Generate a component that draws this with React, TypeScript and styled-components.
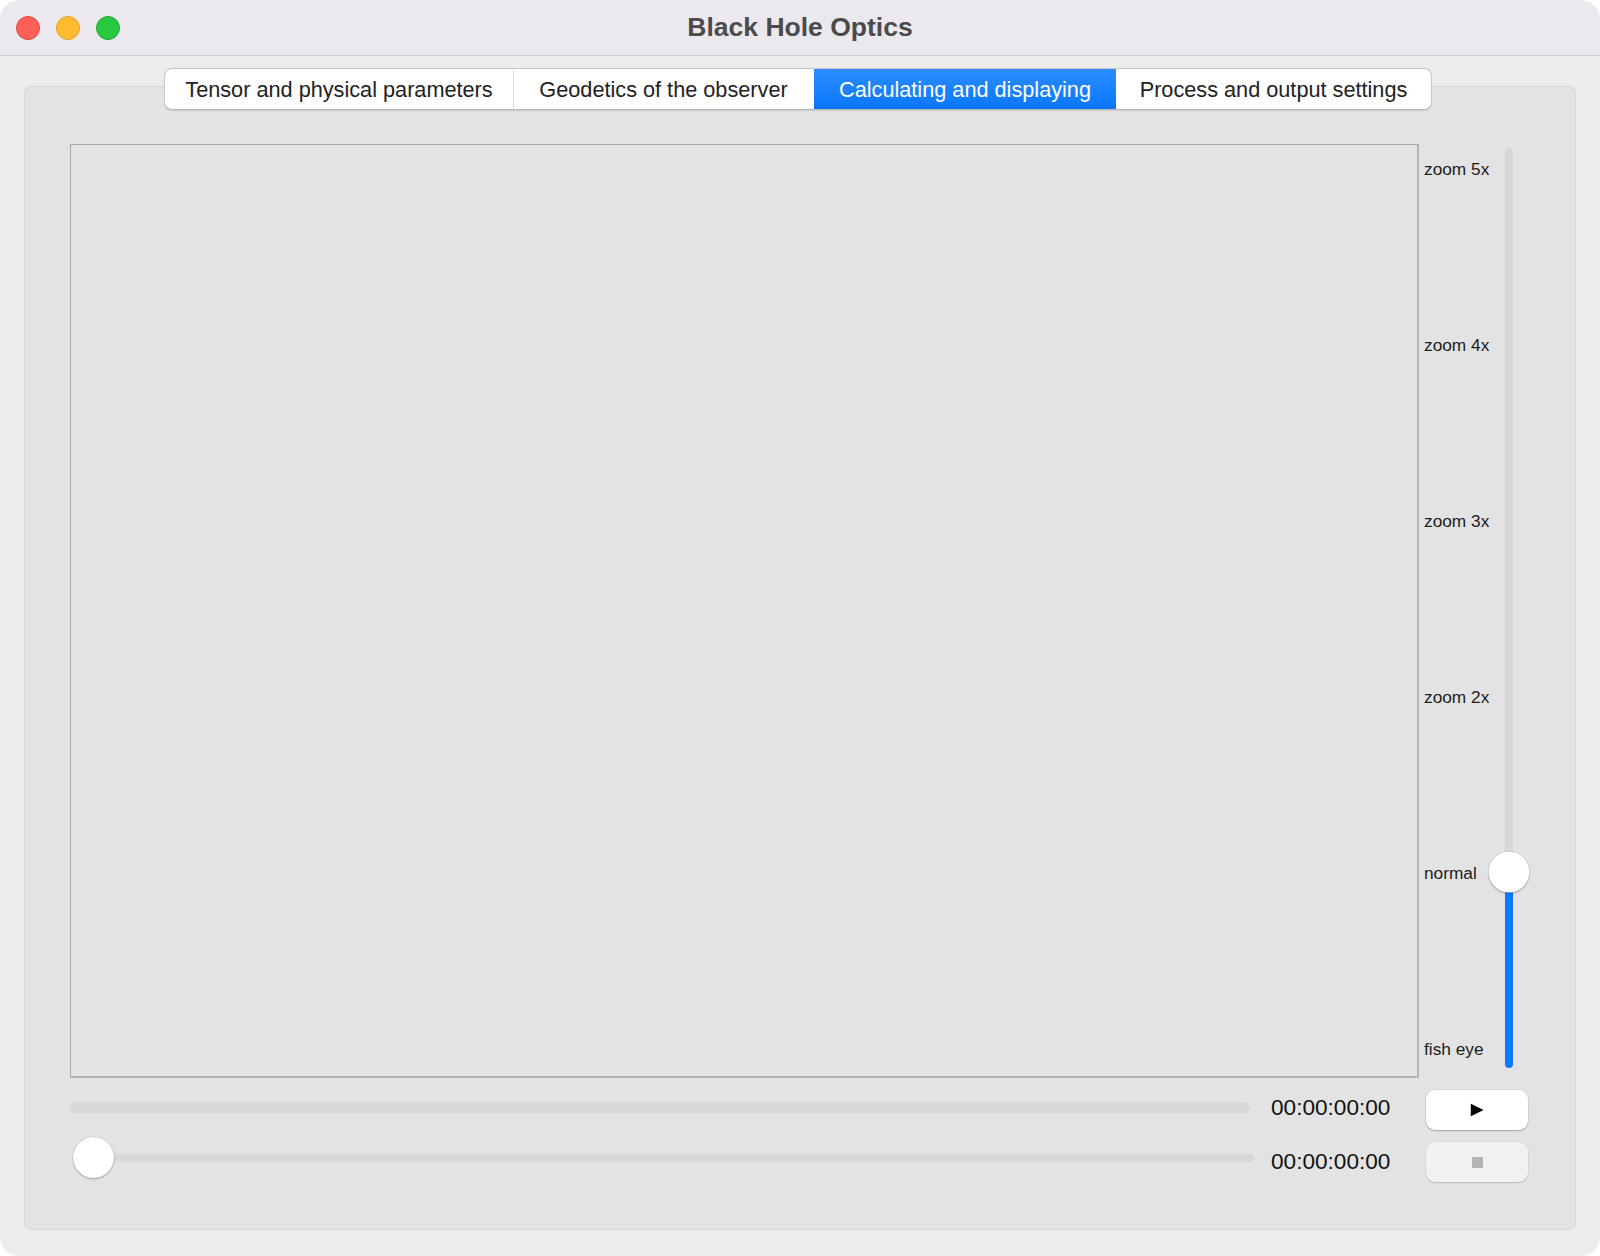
import * as React from 'react';
import styled, { createGlobalStyle } from 'styled-components';

const GlobalStyle = createGlobalStyle`
  *, *::before, *::after {
    box-sizing: border-box;
  }
  html, body {
    margin: 0;
    padding: 0;
    background: #ffffff;
  }
  body {
    font-family: "Liberation Sans", Arial, sans-serif;
  }
`;

const Window = styled.div`
  width: 1600px;
  height: 1256px;
  border-radius: 20px;
  background: #ececec;
  overflow: hidden;
  display: flex;
  flex-direction: column;
`;

const TitleBar = styled.header`
  height: 56px;
  flex: none;
  background: #ebe9ee;
  border-bottom: 1px solid #d0cfd2;
  display: grid;
  grid-template-columns: 1fr auto 1fr;
  align-items: center;
`;

const Lights = styled.div`
  display: flex;
  gap: 16px;
  padding-left: 16px;
`;

const Light = styled.span<{ fill: string; edge: string }>`
  width: 24px;
  height: 24px;
  border-radius: 50%;
  background: ${p => p.fill};
  border: 1px solid ${p => p.edge};
`;

const Title = styled.h1`
  margin: 0;
  font-size: 26.5px;
  font-weight: 700;
  color: #4b4b4d;
  letter-spacing: 0;
`;

const Content = styled.main`
  flex: 1;
  display: flex;
  padding: 30px 24px 26px 24px;
`;

const Panel = styled.section`
  flex: 1;
  display: flex;
  flex-direction: column;
  background: #e3e3e3;
  border: 1px solid #d6d6d6;
  border-radius: 7px;
`;

const TabBar = styled.nav`
  align-self: center;
  margin-top: -19px;
  margin-left: -5px;
  height: 41.5px;
  display: flex;
  background: #ffffff;
  border: 1px solid #c8c8c8;
  border-bottom-color: #b9b9b9;
  border-radius: 8px;
  overflow: hidden;
  box-shadow: 0 0.5px 1px rgba(0, 0, 0, 0.12);
`;

const Tab = styled.div<{ w: number; active?: boolean; divider?: boolean }>`
  width: ${p => p.w}px;
  display: flex;
  align-items: center;
  justify-content: center;
  padding-top: 2px;
  font-size: 21.7px;
  color: ${p => (p.active ? '#ffffff' : '#222222')};
  background: ${p =>
    p.active ? 'linear-gradient(180deg, #2a8cff 0%, #0a77fe 100%)' : 'transparent'};
  border-left: 1px solid ${p => (p.divider ? '#dcdcdc' : 'transparent')};
  white-space: nowrap;
`;

const Body = styled.div`
  display: flex;
  flex-direction: column;
  margin-top: 34.5px;
  padding: 0 47px 0 45px;
`;

const ViewRow = styled.div`
  display: flex;
  height: 934px;
`;

const Canvas = styled.div`
  flex: 1;
  background: #e4e4e4;
  border-top: 1px solid #a9a9a9;
  border-left: 1px solid #a9a9a9;
  border-right: 2px solid #b3b3b3;
  border-bottom: 2px solid #b3b3b3;
`;

const ZoomColumn = styled.div`
  width: 109px;
  display: flex;
  padding-left: 5px;
`;

const ZoomLabels = styled.div`
  flex: 1;
  display: flex;
  flex-direction: column;
  justify-content: space-between;
  padding: 15px 0 19px;
`;

const ZoomLabel = styled.span`
  height: 20px;
  line-height: 20px;
  font-size: 17.3px;
  color: #1c1c1c;
  white-space: nowrap;
`;

const VSlider = styled.div`
  width: 41px;
  display: flex;
  flex-direction: column;
  align-items: center;
  padding: 4px 0 10px;
`;

const VTrack = styled.div`
  position: relative;
  flex: 1;
  width: 8px;
  border-radius: 4px;
  background: #d6d6d6;
`;

const VFill = styled.div`
  position: absolute;
  left: 0;
  right: 0;
  bottom: 0;
  border-radius: 4px;
  background: #0a7aff;
`;

const Thumb = styled.div`
  position: absolute;
  width: 41px;
  height: 41px;
  border-radius: 50%;
  background: #ffffff;
  box-shadow: 0 1px 2px rgba(0, 0, 0, 0.28), 0 0 0 0.5px rgba(0, 0, 0, 0.12);
`;

const VThumb = styled(Thumb)`
  left: 50%;
  transform: translate(-50%, 50%);
`;

const ControlRow = styled.div<{ h: number; gapTop: number }>`
  display: flex;
  align-items: center;
  height: ${p => p.h}px;
  margin-top: ${p => p.gapTop}px;
`;

const Progress = styled.div`
  flex: 1;
  height: 11px;
  border-radius: 6px;
  background: #d8d8d8;
`;

const HSlider = styled.div`
  flex: 1;
  position: relative;
  align-self: flex-start;
  margin: -5px 0 0 3px;
  height: 41px;
  display: flex;
  align-items: center;
`;

const HTrack = styled.div`
  flex: 1;
  height: 8px;
  border-radius: 4px;
  background: #d8d8d8;
`;

const HThumb = styled(Thumb)`
  left: 0;
  top: 0;
`;

const Time = styled.span<{ gap: number }>`
  margin-left: ${p => p.gap}px;
  width: 120px;
  font-size: 22.6px;
  color: #111111;
  white-space: nowrap;
`;

const Button = styled.button<{ disabled?: boolean }>`
  align-self: flex-start;
  margin-left: 35px;
  width: 102px;
  height: 40px;
  padding: 0;
  border: none;
  border-radius: 9px;
  display: flex;
  align-items: center;
  justify-content: center;
  background: ${p => (p.disabled ? '#f1f1f1' : '#ffffff')};
  box-shadow: 0 1px 1.5px rgba(0, 0, 0, ${p => (p.disabled ? 0.14 : 0.25)}),
    0 0 0 0.5px rgba(0, 0, 0, 0.08);
`;

const StopGlyph = styled.span`
  width: 11px;
  height: 11px;
  background: #b5b5b5;
`;

const tabs = [
  { label: 'Tensor and physical parameters', w: 348 },
  { label: 'Geodetics of the observer', w: 301 },
  { label: 'Calculating and displaying', w: 302, active: true },
  { label: 'Process and output settings', w: 315 },
];

const zoomLevels = ['zoom 5x', 'zoom 4x', 'zoom 3x', 'zoom 2x', 'normal', 'fish eye'];

// position of the "normal" step along the vertical track, from the bottom
const zoomValue = 21.26;

export default function App() {
  return (
    <>
      <GlobalStyle />
      <Window>
        <TitleBar>
          <Lights>
            <Light fill="#fe5f57" edge="#e2463f" />
            <Light fill="#febc2e" edge="#e0a126" />
            <Light fill="#28c840" edge="#1dac2c" />
          </Lights>
          <Title>Black Hole Optics</Title>
          <div />
        </TitleBar>
        <Content>
          <Panel>
            <TabBar>
              {tabs.map((t, i) => (
                <Tab
                  key={t.label}
                  w={t.w}
                  active={t.active}
                  divider={i === 1}
                >
                  {t.label}
                </Tab>
              ))}
            </TabBar>
            <Body>
              <ViewRow>
                <Canvas />
                <ZoomColumn>
                  <ZoomLabels>
                    {zoomLevels.map(z => (
                      <ZoomLabel key={z}>{z}</ZoomLabel>
                    ))}
                  </ZoomLabels>
                  <VSlider>
                    <VTrack>
                      <VFill style={{ height: `${zoomValue}%` }} />
                      <VThumb style={{ bottom: `${zoomValue}%` }} />
                    </VTrack>
                  </VSlider>
                </ZoomColumn>
              </ViewRow>
              <ControlRow h={35} gapTop={12}>
                <Progress />
                <Time gap={21}>00:00:00:00</Time>
                <Button>
                  <svg width="14" height="14" viewBox="0 0 14 14">
                    <path d="M0.8 0.8 L13.6 7 L0.8 13.2 Z" fill="#000000" />
                  </svg>
                </Button>
              </ControlRow>
              <ControlRow h={40} gapTop={17}>
                <HSlider>
                  <HTrack />
                  <HThumb />
                </HSlider>
                <Time gap={17}>00:00:00:00</Time>
                <Button disabled>
                  <StopGlyph />
                </Button>
              </ControlRow>
            </Body>
          </Panel>
        </Content>
      </Window>
    </>
  );
}
